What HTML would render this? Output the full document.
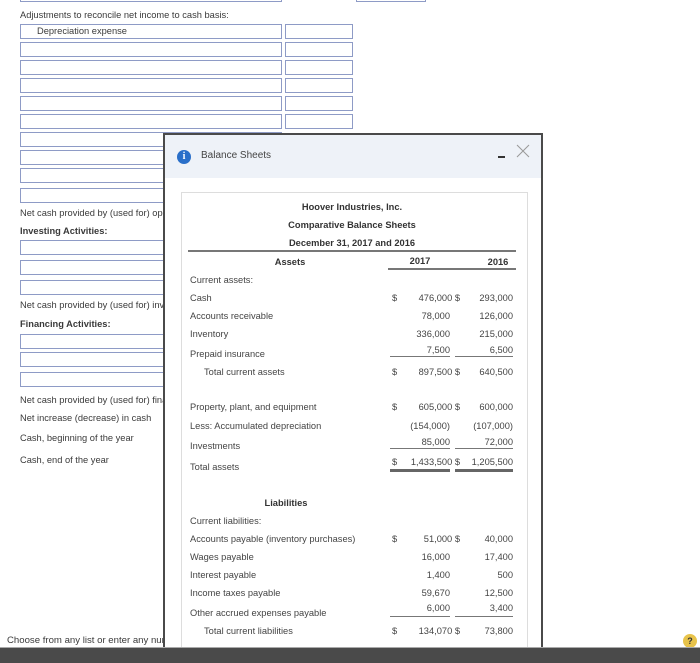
<!DOCTYPE html>
<html><head><style>
*{margin:0;padding:0;box-sizing:border-box}
body{width:700px;height:663px;overflow:hidden;background:#fff;position:relative;font-family:"Liberation Sans",Arial,sans-serif;color:#444}
.a{position:absolute;white-space:nowrap}
.bx{position:absolute;border:1px solid #8e9bc6;background:#fff;height:15px}
.t{position:absolute;white-space:nowrap;font-size:9.3px;color:#3a3a3a;line-height:10px}
.l{position:absolute;font-size:9.3px;line-height:10px;color:#444;white-space:nowrap}
.r{position:absolute;font-size:9.3px;line-height:10px;color:#444;text-align:right;white-space:nowrap}
.b{font-weight:bold}
.hl{position:absolute;height:2px;background:#777}
</style></head><body>
<div class="bx" style="left:20px;top:-12px;width:262px;height:14px"></div>
<div class="bx" style="left:356px;top:-12px;width:70px;height:14px"></div>
<div class="t" style="left:20px;top:10px">Adjustments to reconcile net income to cash basis:</div>
<div class="bx" style="left:20px;top:24px;width:262px"></div><div class="t" style="left:37px;top:26px">Depreciation expense</div>
<div class="bx" style="left:20px;top:42px;width:262px"></div>
<div class="bx" style="left:20px;top:60px;width:262px"></div>
<div class="bx" style="left:20px;top:78px;width:262px"></div>
<div class="bx" style="left:20px;top:96px;width:262px"></div>
<div class="bx" style="left:20px;top:114px;width:262px"></div>
<div class="bx" style="left:20px;top:132px;width:262px"></div>
<div class="bx" style="left:20px;top:150px;width:262px"></div>
<div class="bx" style="left:20px;top:168px;width:262px"></div>
<div class="bx" style="left:20px;top:188px;width:262px"></div>
<div class="bx" style="left:285px;top:24px;width:68px"></div>
<div class="bx" style="left:285px;top:42px;width:68px"></div>
<div class="bx" style="left:285px;top:60px;width:68px"></div>
<div class="bx" style="left:285px;top:78px;width:68px"></div>
<div class="bx" style="left:285px;top:96px;width:68px"></div>
<div class="bx" style="left:285px;top:114px;width:68px"></div>
<div class="t" style="left:20px;top:208px">Net cash provided by (used for) operating</div>
<div class="t b" style="left:20px;top:226px">Investing Activities:</div>
<div class="bx" style="left:20px;top:240px;width:262px"></div>
<div class="bx" style="left:20px;top:260px;width:262px"></div>
<div class="bx" style="left:20px;top:280px;width:262px"></div>
<div class="t" style="left:20px;top:300px">Net cash provided by (used for) investing</div>
<div class="t b" style="left:20px;top:319px">Financing Activities:</div>
<div class="bx" style="left:20px;top:334px;width:262px"></div>
<div class="bx" style="left:20px;top:352px;width:262px"></div>
<div class="bx" style="left:20px;top:372px;width:262px"></div>
<div class="t" style="left:20px;top:395px">Net cash provided by (used for) financing</div>
<div class="t" style="left:20px;top:413px">Net increase (decrease) in cash</div>
<div class="t" style="left:20px;top:433px">Cash, beginning of the year</div>
<div class="t" style="left:20px;top:455px">Cash, end of the year</div>
<div class="t" style="left:7px;top:636px;font-size:9.6px">Choose from any list or enter any number</div>

<div class="a" style="left:163px;top:133px;width:380px;height:530px;border:2px solid #4a4a4a;border-bottom:none;background:#fff;overflow:hidden">
  <div class="a" style="left:0;top:0;width:376px;height:43px;background:#eef2f8"></div>
  <div class="a" style="left:12px;top:15px;width:14px;height:14px;border-radius:50%;background:#2a6fc9;color:#fff;font-size:10px;font-weight:bold;text-align:center;line-height:14px;font-family:'Liberation Serif',serif">i</div>
  <div class="a" style="left:36px;top:15px;font-size:10px;color:#444">Balance Sheets</div>
  <div class="a" style="left:333px;top:21px;width:7px;height:2px;background:#333"></div>
  <svg class="a" style="left:351px;top:9px" width="14" height="14"><path d="M1 1L13 13M13 1L1 13" stroke="#999" stroke-width="1"/></svg>
  <div class="a" style="left:16px;top:57px;width:347px;height:480px;border:1px solid #ddd"></div>
</div>
<div class="l b" style="left:232px;top:202px;width:240px;text-align:center;color:#333">Hoover Industries, Inc.</div>
<div class="l b" style="left:232px;top:220px;width:240px;text-align:center;color:#333">Comparative Balance Sheets</div>
<div class="l b" style="left:232px;top:238px;width:240px;text-align:center;color:#333">December 31, 2017 and 2016</div>
<div class="hl" style="left:188px;top:250px;width:328px"></div>
<div class="l b" style="left:250px;top:257px;width:80px;text-align:center;color:#333">Assets</div>
<div class="l b" style="left:400px;top:256px;width:40px;text-align:center;color:#333">2017</div>
<div class="l b" style="left:478px;top:257px;width:40px;text-align:center;color:#333">2016</div>
<div class="hl" style="left:388px;top:268px;width:128px"></div>

<div class="l" style="left:190px;top:275px">Current assets:</div>
<div class="l" style="left:190px;top:293px">Cash</div>
<div class="l" style="left:190px;top:311px">Accounts receivable</div>
<div class="l" style="left:190px;top:329px">Inventory</div>
<div class="l" style="left:190px;top:349px">Prepaid insurance</div>
<div class="l" style="left:204px;top:367px">Total current assets</div>
<div class="l" style="left:190px;top:402px">Property, plant, and equipment</div>
<div class="l" style="left:190px;top:421px">Less: Accumulated depreciation</div>
<div class="l" style="left:190px;top:441px">Investments</div>
<div class="l" style="left:190px;top:462px">Total assets</div>
<div class="l b" style="left:246px;top:498px;width:80px;text-align:center;color:#333">Liabilities</div>
<div class="l" style="left:190px;top:516px">Current liabilities:</div>
<div class="l" style="left:190px;top:534px">Accounts payable (inventory purchases)</div>
<div class="l" style="left:190px;top:552px">Wages payable</div>
<div class="l" style="left:190px;top:570px">Interest payable</div>
<div class="l" style="left:190px;top:588px">Income taxes payable</div>
<div class="l" style="left:190px;top:608px">Other accrued expenses payable</div>
<div class="l" style="left:204px;top:626px">Total current liabilities</div>

<div class="l" style="left:392px;top:293px">$</div><div class="r" style="left:380px;top:293px;width:80px">476,000 $</div><div class="r" style="left:440px;top:293px;width:73px">293,000</div>
<div class="r" style="left:370px;top:311px;width:80px">78,000</div><div class="r" style="left:440px;top:311px;width:73px">126,000</div>
<div class="r" style="left:370px;top:329px;width:80px">336,000</div><div class="r" style="left:440px;top:329px;width:73px">215,000</div>
<div class="r" style="left:370px;top:345px;width:80px">7,500</div><div class="r" style="left:440px;top:345px;width:73px">6,500</div>
<div class="hl" style="left:390px;top:356px;width:60px;height:1px"></div><div class="hl" style="left:455px;top:356px;width:58px;height:1px"></div>
<div class="l" style="left:392px;top:367px">$</div><div class="r" style="left:380px;top:367px;width:80px">897,500 $</div><div class="r" style="left:440px;top:367px;width:73px">640,500</div>
<div class="l" style="left:392px;top:402px">$</div><div class="r" style="left:380px;top:402px;width:80px">605,000 $</div><div class="r" style="left:440px;top:402px;width:73px">600,000</div>
<div class="r" style="left:370px;top:421px;width:80px">(154,000)</div><div class="r" style="left:440px;top:421px;width:73px">(107,000)</div>
<div class="r" style="left:370px;top:437px;width:80px">85,000</div><div class="r" style="left:440px;top:437px;width:73px">72,000</div>
<div class="hl" style="left:390px;top:448px;width:60px;height:1px"></div><div class="hl" style="left:455px;top:448px;width:58px;height:1px"></div>
<div class="l" style="left:392px;top:457px">$</div><div class="r" style="left:380px;top:457px;width:80px">1,433,500 $</div><div class="r" style="left:440px;top:457px;width:73px">1,205,500</div>
<div class="hl" style="left:390px;top:469px;width:60px;height:3px;background:#666"></div><div class="hl" style="left:455px;top:469px;width:58px;height:3px;background:#666"></div>
<div class="l" style="left:392px;top:534px">$</div><div class="r" style="left:380px;top:534px;width:80px">51,000 $</div><div class="r" style="left:440px;top:534px;width:73px">40,000</div>
<div class="r" style="left:370px;top:552px;width:80px">16,000</div><div class="r" style="left:440px;top:552px;width:73px">17,400</div>
<div class="r" style="left:370px;top:570px;width:80px">1,400</div><div class="r" style="left:440px;top:570px;width:73px">500</div>
<div class="r" style="left:370px;top:588px;width:80px">59,670</div><div class="r" style="left:440px;top:588px;width:73px">12,500</div>
<div class="r" style="left:370px;top:603px;width:80px">6,000</div><div class="r" style="left:440px;top:603px;width:73px">3,400</div>
<div class="hl" style="left:390px;top:616px;width:60px;height:1px"></div><div class="hl" style="left:455px;top:616px;width:58px;height:1px"></div>
<div class="l" style="left:392px;top:626px">$</div><div class="r" style="left:380px;top:626px;width:80px">134,070 $</div><div class="r" style="left:440px;top:626px;width:73px">73,800</div>

<div class="a" style="left:683px;top:634px;width:14px;height:14px;border-radius:50%;background:#e8c34a;color:#333;font-size:9px;font-weight:bold;text-align:center;line-height:14px">?</div>
<div class="a" style="left:0;top:647px;width:700px;height:16px;background:#4a4a4a;border-top:1px solid #aaa"></div>
</body></html>
